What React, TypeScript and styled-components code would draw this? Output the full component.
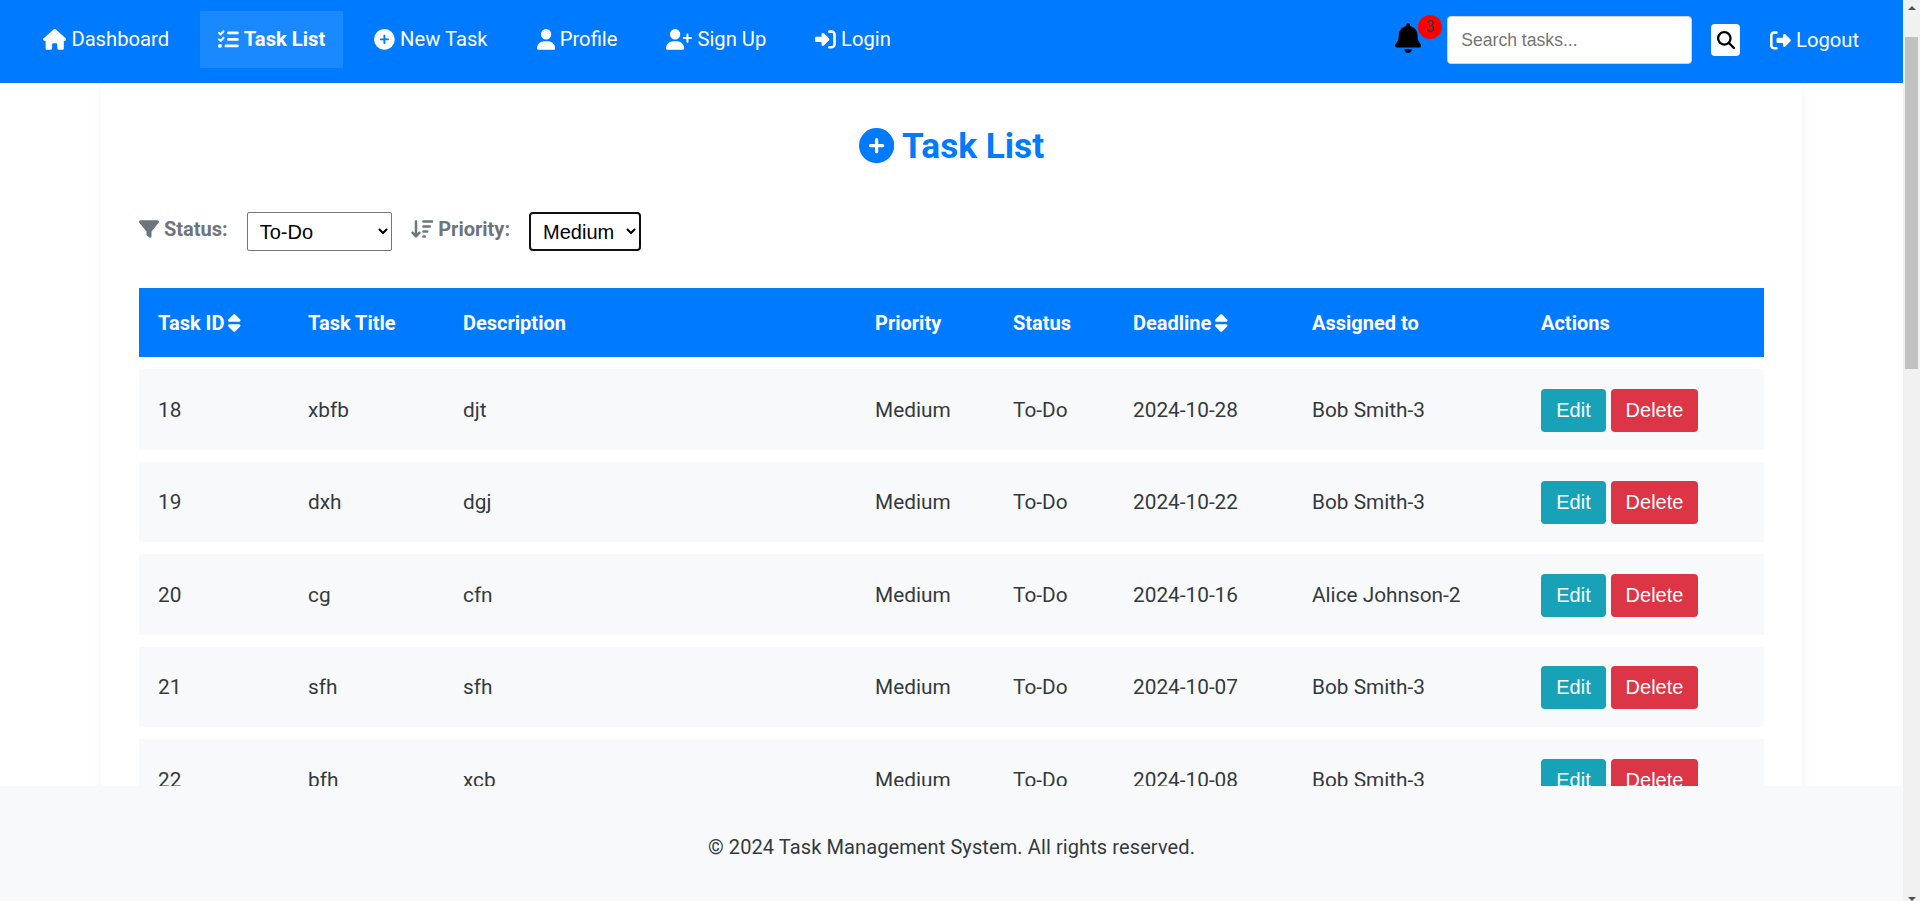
import React from 'react';
import styled, { createGlobalStyle, css } from 'styled-components';
import {
  FaArrowDownWideShort,
  FaBell,
  FaCirclePlus,
  FaFilter,
  FaHouse,
  FaListCheck,
  FaMagnifyingGlass,
  FaRightFromBracket,
  FaRightToBracket,
  FaSort,
  FaUser,
  FaUserPlus,
} from 'react-icons/fa6';

const GlobalStyle = createGlobalStyle`
  * { box-sizing: border-box; }
  body {
    margin: 0;
    background: #fff;
    color: #343a40;
    font-family: Roboto, 'Liberation Sans', sans-serif;
    font-size: 20px;
    line-height: 1.5;
  }
`;

// icons keep the glyph width of the icon font instead of a 1em square
const iconWidths = css`
  svg { height: 1em; flex: none; }
  svg[viewBox^='0 0 320'] { width: 0.625em; }
  svg[viewBox^='0 0 448'] { width: 0.875em; }
  svg[viewBox^='0 0 512'] { width: 1em; }
  svg[viewBox^='0 0 576'] { width: 1.125em; }
  svg[viewBox^='0 0 640'] { width: 1.25em; }
`;

const Shell = styled.div`
  display: flex;
  height: 100vh;
  overflow: hidden;
`;

const Viewport = styled.div`
  display: flex;
  flex-direction: column;
  flex: 1;
  min-width: 0;
`;

const Scrollbar = styled.aside`
  display: flex;
  flex-direction: column;
  align-items: center;
  flex: 0 0 17px;
  background: #f1f1f1;
`;

const ScrollArrowUp = styled.div`
  width: 0;
  height: 0;
  margin-top: 6px;
  border-left: 4px solid transparent;
  border-right: 4px solid transparent;
  border-bottom: 4px solid #505050;
`;

const ScrollArrowDown = styled.div`
  width: 0;
  height: 0;
  margin-top: auto;
  border-left: 4px solid transparent;
  border-right: 4px solid transparent;
  border-top: 4px solid #505050;
`;

const ScrollThumb = styled.div`
  width: 13px;
  height: 332px;
  margin-top: 27px;
  background: #c1c1c1;
`;

const Navbar = styled.nav`
  display: flex;
  align-items: center;
  flex: 0 0 83px;
  padding: 0 26px 3px 25px;
  background: #007bff;
`;

const NavLinks = styled.div`
  display: flex;
  align-items: center;
  gap: 13px;
  flex: 1;
  margin-top: -1px;
`;

const NavLink = styled.a<{ $active?: boolean }>`
  display: flex;
  align-items: center;
  gap: 5px;
  height: 57px;
  padding: 0 18px;
  color: #fff;
  font-size: 20.2px;
  font-weight: ${(p) => (p.$active ? 700 : 400)};
  background: ${(p) => (p.$active ? 'rgba(255, 255, 255, 0.1)' : 'transparent')};
  white-space: nowrap;
  ${iconWidths}
  svg { font-size: 20.8px; }
`;

const BellWrap = styled.div`
  position: relative;
  display: flex;
  margin: -4px 26px 0 0;
  color: #000;
  ${iconWidths}
  svg { font-size: 30px; }
`;

const Badge = styled.span`
  position: absolute;
  top: -8px;
  left: 23px;
  width: 24px;
  height: 24px;
  border-radius: 50%;
  background: #f00;
  color: #343a40;
  font-size: 16px;
  line-height: 24px;
  text-align: center;
`;

const SearchInput = styled.input`
  width: 245px;
  height: 48px;
  padding: 0 13px;
  border: 1px solid #ced4da;
  border-radius: 4px;
  background: #fff;
  font-family: 'Liberation Sans', Arial, sans-serif;
  font-size: 17.6px;
  &::placeholder { color: #757575; }
`;

const SearchButton = styled.button`
  display: flex;
  align-items: center;
  justify-content: center;
  width: 29px;
  height: 32px;
  margin: 0 12px 0 19px;
  padding: 0;
  border: 0;
  border-radius: 4px;
  background: #fff;
  color: #000;
  font-size: 18px;
`;

const Content = styled.div`
  flex: 1;
  min-height: 0;
  overflow: hidden;
`;

const Page = styled.main`
  width: 1701px;
  margin: 0 auto;
  padding: 37px 38px 0;
  background: #fff;
  box-shadow: 0 0 10px rgba(0, 0, 0, 0.05);
`;

const Title = styled.h1`
  display: flex;
  align-items: center;
  justify-content: center;
  gap: 8px;
  margin: 0 0 40px;
  color: #007bff;
  font-size: 35.2px;
  font-weight: 700;
  line-height: 52px;
`;

const Filters = styled.div`
  display: flex;
  align-items: center;
  height: 39px;
  margin-bottom: 37px;
`;

const FilterLabel = styled.label`
  display: flex;
  align-items: center;
  gap: 5px;
  margin-top: -5px;
  color: #6c757d;
  font-size: 20px;
  font-weight: 700;
  ${iconWidths}
`;

const FilterSelect = styled.select<{ $width: number; $focused?: boolean }>`
  width: ${(p) => p.$width}px;
  height: 39px;
  margin: 0 19px;
  padding: 0 4px 0 8px;
  border: ${(p) => (p.$focused ? '2px solid #101010' : '1px solid #767676')};
  border-radius: ${(p) => (p.$focused ? 4 : 2)}px;
  background: #fff;
  color: #000;
  font-family: 'Liberation Sans', Arial, sans-serif;
  font-size: 20px;
`;

const Table = styled.table`
  width: 1625px;
  table-layout: fixed;
  border-collapse: separate;
  border-spacing: 0 12px;
  margin-top: -12px;
`;

const HeadCell = styled.th`
  height: 69px;
  padding: 0 19px;
  background: #007bff;
  color: #fff;
  font-size: 20px;
  font-weight: 700;
  text-align: left;
  white-space: nowrap;
  ${iconWidths}
  svg { margin-left: 4px; vertical-align: -3px; }
`;

const BodyRow = styled.tr`
  background: #f8f9fa;
`;

const BodyCell = styled.td`
  height: 80.5px;
  padding: 2px 19px 0;
  font-size: 20.8px;
  white-space: nowrap;
`;

const ActionButton = styled.button<{ $tone: 'info' | 'danger' }>`
  width: ${(p) => (p.$tone === 'info' ? 65 : 87)}px;
  height: 43px;
  margin-right: 5px;
  padding: 0;
  border: 0;
  border-radius: 4px;
  background: ${(p) => (p.$tone === 'info' ? '#17a2b8' : '#dc3545')};
  color: #fff;
  font-family: 'Liberation Sans', Arial, sans-serif;
  font-size: 20px;
  vertical-align: 2px;
`;

const Footer = styled.footer`
  display: flex;
  align-items: center;
  justify-content: center;
  flex: 0 0 115px;
  padding-top: 7px;
  background: #f8f9fa;
  color: #343a40;
  font-size: 20px;
  letter-spacing: 0.1px;
`;

const columns = [150, 155, 412, 138, 120, 179, 229, 242];

const tasks = [
  { id: 18, title: 'xbfb', description: 'djt', deadline: '2024-10-28', assignee: 'Bob Smith-3' },
  { id: 19, title: 'dxh', description: 'dgj', deadline: '2024-10-22', assignee: 'Bob Smith-3' },
  { id: 20, title: 'cg', description: 'cfn', deadline: '2024-10-16', assignee: 'Alice Johnson-2' },
  { id: 21, title: 'sfh', description: 'sfh', deadline: '2024-10-07', assignee: 'Bob Smith-3' },
  { id: 22, title: 'bfh', description: 'xcb', deadline: '2024-10-08', assignee: 'Bob Smith-3' },
];

const App = () => (
  <Shell>
    <GlobalStyle />
    <Viewport>
      <Navbar>
        <NavLinks>
          <NavLink><FaHouse /> Dashboard</NavLink>
          <NavLink $active><FaListCheck /> Task List</NavLink>
          <NavLink><FaCirclePlus /> New Task</NavLink>
          <NavLink><FaUser /> Profile</NavLink>
          <NavLink><FaUserPlus /> Sign Up</NavLink>
          <NavLink><FaRightToBracket /> Login</NavLink>
        </NavLinks>
        <BellWrap>
          <FaBell />
          <Badge>3</Badge>
        </BellWrap>
        <SearchInput placeholder="Search tasks..." />
        <SearchButton><FaMagnifyingGlass /></SearchButton>
        <NavLink><FaRightFromBracket /> Logout</NavLink>
      </Navbar>
      <Content>
        <Page>
          <Title><FaCirclePlus /> Task List</Title>
          <Filters>
            <FilterLabel><FaFilter /> Status:</FilterLabel>
            <FilterSelect $width={145} defaultValue="To-Do">
              <option>To-Do</option>
            </FilterSelect>
            <FilterLabel><FaArrowDownWideShort /> Priority:</FilterLabel>
            <FilterSelect $width={112} $focused defaultValue="Medium">
              <option>Medium</option>
            </FilterSelect>
          </Filters>
          <Table>
            <colgroup>
              {columns.map((width, i) => <col key={i} width={width} />)}
            </colgroup>
            <thead>
              <tr>
                <HeadCell>Task ID<FaSort /></HeadCell>
                <HeadCell>Task Title</HeadCell>
                <HeadCell>Description</HeadCell>
                <HeadCell>Priority</HeadCell>
                <HeadCell>Status</HeadCell>
                <HeadCell>Deadline<FaSort /></HeadCell>
                <HeadCell>Assigned to</HeadCell>
                <HeadCell>Actions</HeadCell>
              </tr>
            </thead>
            <tbody>
              {tasks.map((task) => (
                <BodyRow key={task.id}>
                  <BodyCell>{task.id}</BodyCell>
                  <BodyCell>{task.title}</BodyCell>
                  <BodyCell>{task.description}</BodyCell>
                  <BodyCell>Medium</BodyCell>
                  <BodyCell>To-Do</BodyCell>
                  <BodyCell>{task.deadline}</BodyCell>
                  <BodyCell>{task.assignee}</BodyCell>
                  <BodyCell>
                    <ActionButton $tone="info">Edit</ActionButton>
                    <ActionButton $tone="danger">Delete</ActionButton>
                  </BodyCell>
                </BodyRow>
              ))}
            </tbody>
          </Table>
        </Page>
      </Content>
      <Footer>© 2024 Task Management System. All rights reserved.</Footer>
    </Viewport>
    <Scrollbar>
      <ScrollArrowUp />
      <ScrollThumb />
      <ScrollArrowDown />
    </Scrollbar>
  </Shell>
);

export default App;
